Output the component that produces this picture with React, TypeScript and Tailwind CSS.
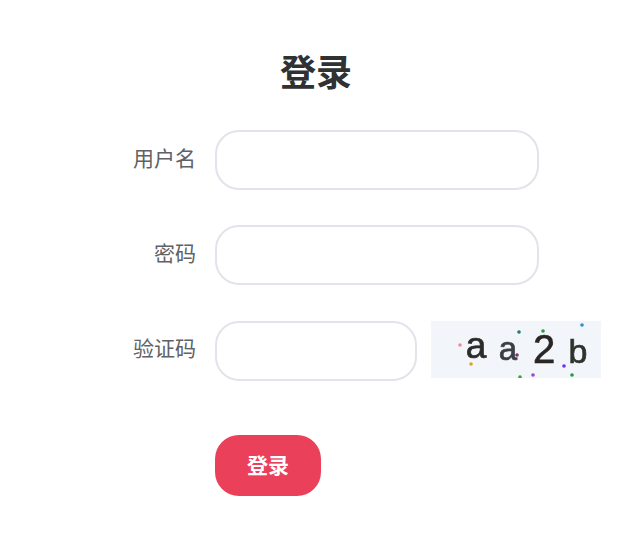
const font = "[font-family:'Liberation_Sans','Noto_Sans_CJK_SC',sans-serif]";

const captchaDots = [
  { x: 29, y: 24, fill: "#f08a9a" },
  { x: 40, y: 43, fill: "#d9a520" },
  { x: 88, y: 11, fill: "#1f7a70" },
  { x: 112, y: 10, fill: "#2a9a3a" },
  { x: 151, y: 4, fill: "#2f8fd0" },
  { x: 86, y: 34, fill: "#8a2a70" },
  { x: 133, y: 45, fill: "#6a30f0" },
  { x: 102, y: 54, fill: "#a040e0" },
  { x: 89, y: 56, fill: "#38a040" },
  { x: 141, y: 54, fill: "#249a40" },
];

const captchaChars = [
  { x: 45, y: 37, size: 37, ch: "a", fill: "#2b2b2b" },
  { x: 77, y: 39, size: 33, ch: "a", fill: "#3a3f45" },
  { x: 113, y: 42, size: 40, ch: "2", fill: "#2a2626" },
  { x: 147, y: 42, size: 34, ch: "b", fill: "#2e332e" },
];

function Captcha() {
  return (
    <svg width="170" height="57" viewBox="0 0 170 57" className="ml-[14px] self-start bg-[#f2f6fa]">
      <g className="blur-[0.5px]">
        {captchaChars.map((c, i) => (
          <text
            key={i}
            x={c.x}
            y={c.y}
            fontSize={c.size}
            fill={c.fill}
            stroke={c.fill}
            strokeWidth="0.7"
            textAnchor="middle"
            fontFamily="'Liberation Sans', sans-serif"
          >
            {c.ch}
          </text>
        ))}
        {captchaDots.map((d, i) => (
          <circle key={i} cx={d.x} cy={d.y} r="1.8" fill={d.fill} />
        ))}
      </g>
    </svg>
  );
}

function Row({
  label,
  labelClass,
  inputClass,
  children,
}: {
  label: string;
  labelClass: string;
  inputClass: string;
  children?: React.ReactNode;
}) {
  return (
    <div className="flex items-start">
      <label className={`w-[196px] text-right text-[21px] leading-[30px] text-[#606266] ${labelClass}`}>{label}</label>
      <input
        className={`ml-[19px] h-[60px] rounded-[24px] border-2 border-[#e2e3eb] bg-white outline-none ${inputClass}`}
      />
      {children}
    </div>
  );
}

export default function App() {
  return (
    <div className={`${font} h-[552px] w-[640px] overflow-hidden bg-white`}>
      <h1 className="w-[632px] pt-[49px] text-center text-[36px] font-bold leading-[50px] text-[#303133]">登录</h1>
      <form className="mt-[31px] flex flex-col">
        <Row label="用户名" labelClass="pt-[14px]" inputClass="w-[324px]" />
        <div className="mt-[35px]">
          <Row label="密码" labelClass="pt-[14px]" inputClass="w-[324px]" />
        </div>
        <div className="mt-[36px]">
          <Row label="验证码" labelClass="pt-[13px]" inputClass="w-[202px]">
            <Captcha />
          </Row>
        </div>
        <button
          type="button"
          className="ml-[215px] mt-[54px] h-[61px] w-[106px] rounded-[24px] bg-[#ea405a] text-[21px] font-bold text-white"
        >
          登录
        </button>
      </form>
    </div>
  );
}
